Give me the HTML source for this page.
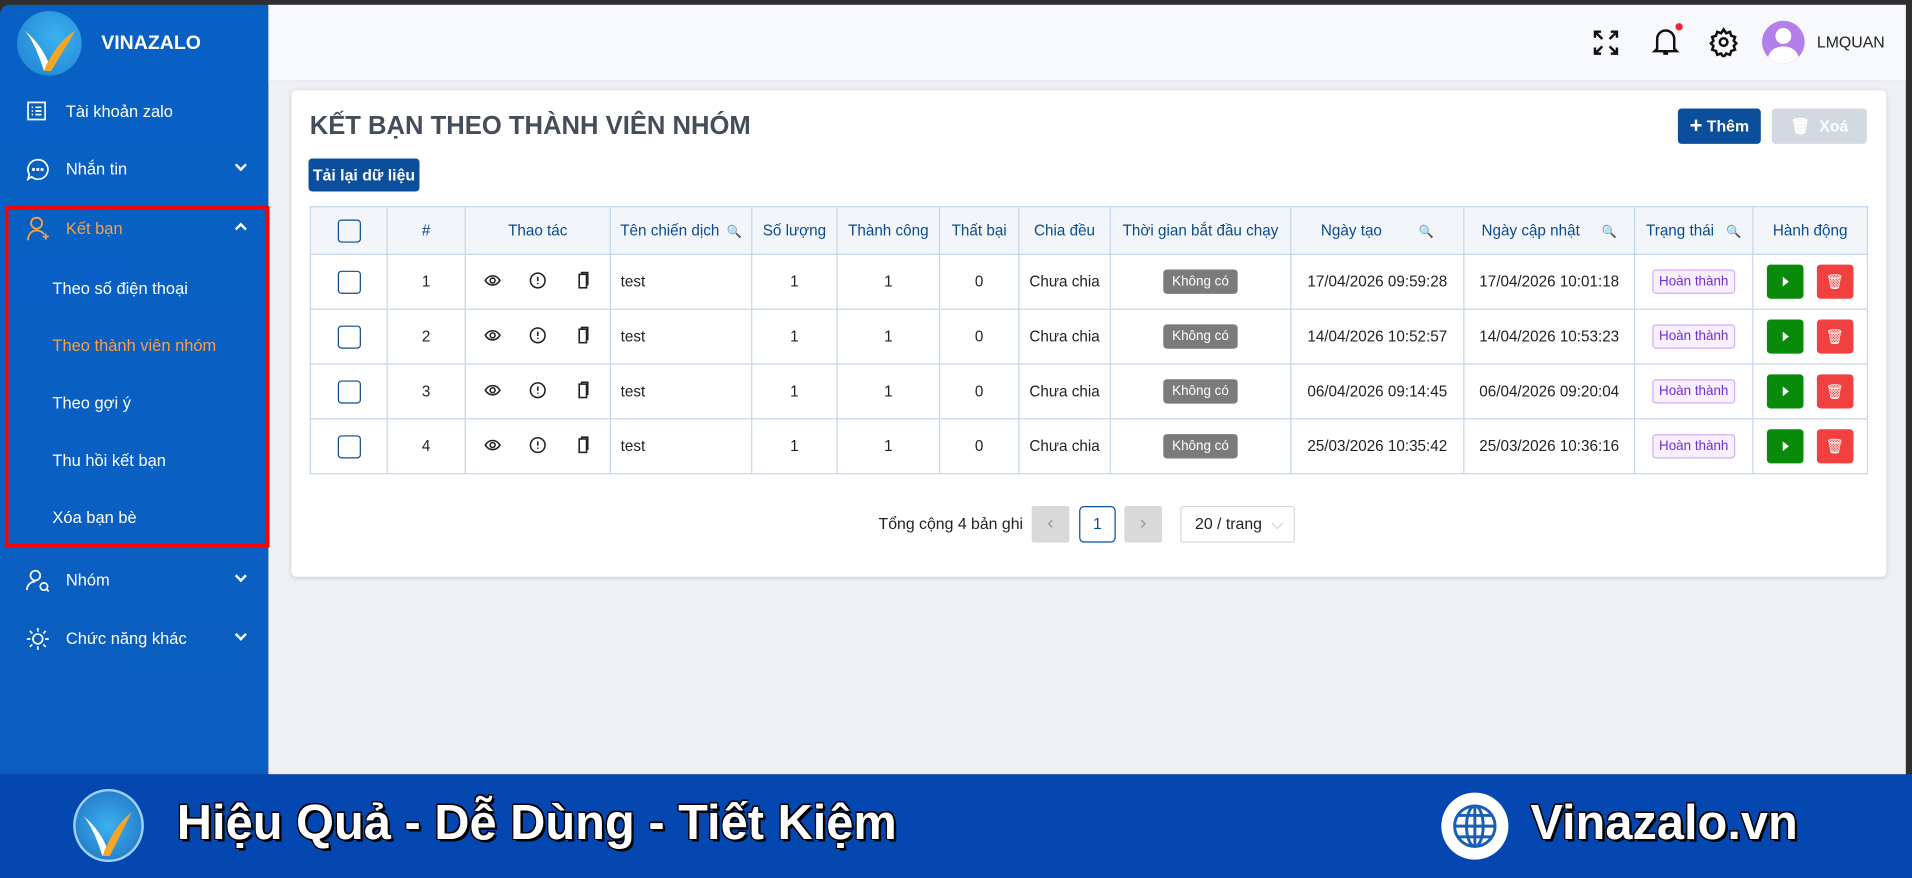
<!DOCTYPE html>
<html><head><meta charset="utf-8"><style>
*{box-sizing:border-box;margin:0;padding:0}
body{width:1912px;height:878px;overflow:hidden;background:#333;font-family:"Liberation Sans",Arial,sans-serif}
#s{position:absolute;left:0;top:0;width:1568px;height:720px;transform:scale(1.21939);transform-origin:0 0;background:#2f2f2f}
.abs{position:absolute}
.side{left:0;top:4px;width:220px;height:631px;background:linear-gradient(180deg,#0860c4,#0a5fc2 60%,#0b5ebf);border-top-left-radius:8px}
.side .it{position:absolute;left:54px;color:#fff;font-size:13.5px}
.side .sub{position:absolute;left:43px;color:#fff;font-size:13.5px}
.chev{position:absolute;left:194px;width:7px;height:7px;border-right:2px solid #fff;border-bottom:2px solid #fff;transform:rotate(45deg)}
.main{left:220px;top:4px;width:1343px;height:631px;background:#eef0f4}
.hdr{left:220px;top:4px;width:1343px;height:63px;background:#f7f9fc;border-bottom:1px solid #e3e6ea}
.card{left:239px;top:74px;width:1308px;height:399px;background:#fff;border-radius:4px;box-shadow:0 1px 4px rgba(0,0,0,.15)}
table{position:absolute;left:254px;top:169px;border-collapse:collapse;font-size:12.5px;color:#222}
td,th{border:1px solid #c5d6ea;text-align:center;padding:0}
th{height:39px;background:#f2f5fa;color:#0b4b8c;font-weight:normal;font-size:12.5px}
td{height:45px}
.cb{display:inline-block;width:19px;height:19px;border:1.5px solid #0b4b8c;border-radius:3px;vertical-align:middle}
.kc{display:inline-block;background:#7b7b7b;color:#fff;font-size:11px;padding:4px 7px;border-radius:3px}
.ht{display:inline-block;border:1px solid #d3adf7;background:#f9f0ff;color:#722ed1;font-size:11px;padding:3px 5px;border-radius:3px}
.bg{display:inline-block;width:30px;height:28px;border-radius:3px;vertical-align:middle;position:relative}
.q{font-size:10px;color:#0b4b8c;margin-left:6px}
.ban{left:0;top:635px;width:1568px;height:85px;background:#0547b1}
.bt{color:#fff;font-weight:bold;font-size:40px;text-shadow:2px 2px 0 #000,-1px -1px 0 #000,1px -1px 0 #000,-1px 1px 0 #000;font-family:"Liberation Sans",sans-serif}
</style></head><body><div id="s">
<div class="abs main"></div>
<div class="abs hdr"></div>
<div class="abs" style="left:1563px;top:4px;width:5px;height:631px;background:#2f2f2f"></div>
<svg class="abs" style="left:1306px;top:24px" width="22" height="22" viewBox="0 0 22 22" fill="none" stroke="#111" stroke-width="2"><path d="M2 7V2h5M15 2h5v5M20 15v5h-5M7 20H2v-5M2 2l6 6M20 2l-6 6M20 20l-6-6M2 20l6-6"/></svg>
<svg class="abs" style="left:1354px;top:21px" width="24" height="26" viewBox="0 0 24 26" fill="none" stroke="#111" stroke-width="2"><path d="M5 19V11a7 7 0 0114 0v8l2 2H3zM10 23h4"/></svg>
<div class="abs" style="left:1374px;top:19px;width:6px;height:6px;border-radius:50%;background:#f5222d"></div>
<svg class="abs" style="left:1401px;top:22px" width="25" height="25" viewBox="0 0 24 24" fill="none" stroke="#111" stroke-width="2"><circle cx="12" cy="12" r="3"/><path d="M12 2l2 3 3-1 1 3 3 1-1 3 2 2-2 2 1 3-3 1-1 3-3-1-2 3-2-3-3 1-1-3-3-1 1-3-2-2 2-2-1-3 3-1 1-3 3 1z"/></svg>
<div class="abs" style="left:1445px;top:17px;width:35px;height:35px;border-radius:50%;background:#b37feb;overflow:hidden"><div class="abs" style="left:11px;top:6px;width:13px;height:13px;border-radius:50%;background:#fff"></div><div class="abs" style="left:5px;top:21px;width:25px;height:20px;border-radius:50%;background:#fff"></div></div>
<div class="abs" style="left:1490px;top:27px;font-size:13px;color:#222">LMQUAN</div>
<div class="abs side">
<div class="abs" style="left:14px;top:5px;width:53px;height:53px;border-radius:50%;background:radial-gradient(circle at 60% 40%,#3db1ef,#1d7fd0)"></div>
<svg class="abs" style="left:14px;top:5px" width="53" height="53" viewBox="0 0 53 53"><path d="M6 16c6 6 12 20 16 33h6C24 34 14 22 6 16z" fill="#fff"/><path d="M22 49l6 0 20-33c-10 6-20 18-26 33z" fill="#f6a623"/></svg>
<div class="abs" style="left:83px;top:23px;color:#fff;font-weight:bold;font-size:16px">VINAZALO</div>
<svg class="abs" style="left:22px;top:79px" width="16" height="16" viewBox="0 0 16 16" fill="none" stroke="#fff" stroke-width="1.4"><rect x="1" y="1" width="14" height="14"/><path d="M4 5h1M7 5h5M4 8h1M7 8h5M4 11h1M7 11h5"/></svg>
<div class="it" style="top:80px">Tài khoản zalo</div>
<svg class="abs" style="left:21px;top:125px" width="20" height="20" viewBox="0 0 20 20" fill="none" stroke="#fff" stroke-width="1.4"><path d="M10 2a8 8 0 11-5 14l-3 2 1-4A8 8 0 0110 2z"/><circle cx="6.5" cy="10" r=".6" fill="#fff"/><circle cx="10" cy="10" r=".6" fill="#fff"/><circle cx="13.5" cy="10" r=".6" fill="#fff"/></svg>
<div class="it" style="top:127px">Nhắn tin</div><div class="chev" style="top:128px"></div>
<svg class="abs" style="left:21px;top:173px" width="20" height="22" viewBox="0 0 20 22" fill="none" stroke="#f5a04a" stroke-width="1.5"><circle cx="9" cy="6" r="4.5"/><path d="M2 20c0-5 3-8 7-8s5 2 6 3M14 17h5M16.5 14.5v5"/></svg>
<div class="it" style="top:176px;color:#f5a04a">Kết bạn</div><div class="chev" style="top:180px;transform:rotate(225deg)"></div>
<div class="sub" style="top:225px">Theo số điện thoại</div>
<div class="sub" style="top:272px;color:#f5a04a">Theo thành viên nhóm</div>
<div class="sub" style="top:319px">Theo gợi ý</div>
<div class="sub" style="top:366px">Thu hồi kết bạn</div>
<div class="sub" style="top:413px">Xóa bạn bè</div>
<div class="abs" style="left:4px;top:165px;width:217px;height:280px;border:3px solid #f00"></div>
<svg class="abs" style="left:21px;top:462px" width="20" height="20" viewBox="0 0 20 20" fill="none" stroke="#fff" stroke-width="1.4"><circle cx="8" cy="6" r="4"/><path d="M1 18c0-4 3-7 7-7M12 15a3 3 0 106 0 3 3 0 10-6 0M17 17l2 2"/></svg>
<div class="it" style="top:464px">Nhóm</div><div class="chev" style="top:465px"></div>
<svg class="abs" style="left:21px;top:510px" width="20" height="20" viewBox="0 0 20 20" fill="none" stroke="#fff" stroke-width="1.4"><circle cx="10" cy="10" r="4"/><path d="M10 1v3M10 16v3M1 10h3M16 10h3M3.5 3.5l2 2M14.5 14.5l2 2M3.5 16.5l2-2M14.5 5.5l2-2"/></svg>
<div class="it" style="top:512px">Chức năng khác</div><div class="chev" style="top:513px"></div>
</div>
<div class="abs card"></div>
<div class="abs" style="left:254px;top:92px;font-size:21px;font-weight:bold;color:#454d5a">KẾT BẠN THEO THÀNH VIÊN NHÓM</div>
<div class="abs" style="left:1376px;top:89px;width:68px;height:29px;background:#0b4f9c;border-radius:3px;color:#fff;font-size:13px;font-weight:bold;line-height:29px;text-align:center"><span style="font-size:18px;vertical-align:-1px">+</span> Thêm</div>
<div class="abs" style="left:1453px;top:89px;width:78px;height:29px;background:#d3d9e1;border-radius:3px;color:#fff;font-size:13px;font-weight:bold;line-height:29px;text-align:center">🗑&nbsp; Xoá</div>
<div class="abs" style="left:253px;top:130px;width:91px;height:27px;background:#0b4f9c;border-radius:3px;color:#fff;font-size:13px;font-weight:bold;line-height:27px;text-align:center">Tải lại dữ liệu</div>
<table>
<tr><th style="width:63px"><span class="cb"></span></th><th style="width:64px">#</th><th style="width:119px">Thao tác</th><th style="width:116px">Tên chiến dịch<span class="q">🔍</span></th><th style="width:70px">Số lượng</th><th style="width:84px">Thành công</th><th style="width:65px">Thất bại</th><th style="width:75px">Chia đều</th><th style="width:148px">Thời gian bắt đầu chạy</th><th style="width:142px">Ngày tạo<span class="q" style="margin-left:30px">🔍</span></th><th style="width:140px">Ngày cập nhật<span class="q" style="margin-left:18px">🔍</span></th><th style="width:97px">Trạng thái<span class="q" style="margin-left:10px">🔍</span></th><th style="width:94px">Hành động</th></tr>
<tr><td><span class="cb"></span></td><td>1</td><td><svg width="100" height="16" viewBox="0 0 100 16" fill="none" stroke="#222" stroke-width="1.3"><path d="M7 8c3-5 9-5 12 0-3 5-9 5-12 0z"/><circle cx="13" cy="8" r="2"/><circle cx="50" cy="8" r="6"/><path d="M50 5v3.5M50 10v1"/><rect x="84" y="3" width="6" height="11"/><path d="M86 3V1.5h5V12"/></svg></td><td style="text-align:left;padding-left:8px">test</td><td>1</td><td>1</td><td>0</td><td>Chưa chia</td><td><span class="kc">Không có</span></td><td>17/04/2026 09:59:28</td><td>17/04/2026 10:01:18</td><td><span class="ht">Hoàn thành</span></td><td><span class="bg" style="background:#0a8a0a"><b style="position:absolute;left:13px;top:10px;border-left:5px solid #fff;border-top:4px solid transparent;border-bottom:4px solid transparent"></b></span>&nbsp;&nbsp;&nbsp;<span class="bg" style="background:#f24040;color:#fff;font-size:12px;line-height:28px">🗑</span></td></tr>
<tr><td><span class="cb"></span></td><td>2</td><td><svg width="100" height="16" viewBox="0 0 100 16" fill="none" stroke="#222" stroke-width="1.3"><path d="M7 8c3-5 9-5 12 0-3 5-9 5-12 0z"/><circle cx="13" cy="8" r="2"/><circle cx="50" cy="8" r="6"/><path d="M50 5v3.5M50 10v1"/><rect x="84" y="3" width="6" height="11"/><path d="M86 3V1.5h5V12"/></svg></td><td style="text-align:left;padding-left:8px">test</td><td>1</td><td>1</td><td>0</td><td>Chưa chia</td><td><span class="kc">Không có</span></td><td>14/04/2026 10:52:57</td><td>14/04/2026 10:53:23</td><td><span class="ht">Hoàn thành</span></td><td><span class="bg" style="background:#0a8a0a"><b style="position:absolute;left:13px;top:10px;border-left:5px solid #fff;border-top:4px solid transparent;border-bottom:4px solid transparent"></b></span>&nbsp;&nbsp;&nbsp;<span class="bg" style="background:#f24040;color:#fff;font-size:12px;line-height:28px">🗑</span></td></tr>
<tr><td><span class="cb"></span></td><td>3</td><td><svg width="100" height="16" viewBox="0 0 100 16" fill="none" stroke="#222" stroke-width="1.3"><path d="M7 8c3-5 9-5 12 0-3 5-9 5-12 0z"/><circle cx="13" cy="8" r="2"/><circle cx="50" cy="8" r="6"/><path d="M50 5v3.5M50 10v1"/><rect x="84" y="3" width="6" height="11"/><path d="M86 3V1.5h5V12"/></svg></td><td style="text-align:left;padding-left:8px">test</td><td>1</td><td>1</td><td>0</td><td>Chưa chia</td><td><span class="kc">Không có</span></td><td>06/04/2026 09:14:45</td><td>06/04/2026 09:20:04</td><td><span class="ht">Hoàn thành</span></td><td><span class="bg" style="background:#0a8a0a"><b style="position:absolute;left:13px;top:10px;border-left:5px solid #fff;border-top:4px solid transparent;border-bottom:4px solid transparent"></b></span>&nbsp;&nbsp;&nbsp;<span class="bg" style="background:#f24040;color:#fff;font-size:12px;line-height:28px">🗑</span></td></tr>
<tr><td><span class="cb"></span></td><td>4</td><td><svg width="100" height="16" viewBox="0 0 100 16" fill="none" stroke="#222" stroke-width="1.3"><path d="M7 8c3-5 9-5 12 0-3 5-9 5-12 0z"/><circle cx="13" cy="8" r="2"/><circle cx="50" cy="8" r="6"/><path d="M50 5v3.5M50 10v1"/><rect x="84" y="3" width="6" height="11"/><path d="M86 3V1.5h5V12"/></svg></td><td style="text-align:left;padding-left:8px">test</td><td>1</td><td>1</td><td>0</td><td>Chưa chia</td><td><span class="kc">Không có</span></td><td>25/03/2026 10:35:42</td><td>25/03/2026 10:36:16</td><td><span class="ht">Hoàn thành</span></td><td><span class="bg" style="background:#0a8a0a"><b style="position:absolute;left:13px;top:10px;border-left:5px solid #fff;border-top:4px solid transparent;border-bottom:4px solid transparent"></b></span>&nbsp;&nbsp;&nbsp;<span class="bg" style="background:#f24040;color:#fff;font-size:12px;line-height:28px">🗑</span></td></tr>
</table>
<div class="abs" style="left:700px;top:422px;width:139px;text-align:right;font-size:13px;color:#222">Tổng cộng 4 bản ghi</div>
<div class="abs" style="left:846px;top:415px;width:31px;height:30px;background:#d9d9d9;border-radius:2px;color:#999;text-align:center;line-height:30px">‹</div>
<div class="abs" style="left:885px;top:415px;width:30px;height:30px;border:1px solid #0b4f9c;border-radius:4px;color:#0b4f9c;text-align:center;line-height:28px;font-size:13px">1</div>
<div class="abs" style="left:922px;top:415px;width:31px;height:30px;background:#d9d9d9;border-radius:2px;color:#999;text-align:center;line-height:30px">›</div>
<div class="abs" style="left:968px;top:415px;width:94px;height:30px;border:1px solid #d9d9d9;border-radius:2px;font-size:13px;color:#222;line-height:28px;padding-left:11px">20 / trang <span style="color:#bbb;margin-left:4px">⌵</span></div>
<div class="abs ban"></div>
<div class="abs" style="left:60px;top:647px;width:58px;height:60px;border-radius:50%;background:radial-gradient(circle,#3db1ef,#1d6fc0);border:2px solid #9fd0f5"></div>
<svg class="abs" style="left:60px;top:647px" width="58" height="60" viewBox="0 0 58 60"><path d="M8 22c6 6 12 20 16 33h6C26 40 16 28 8 22z" fill="#fff"/><path d="M24 55h6l18-36c-10 8-18 20-24 36z" fill="#f6a623"/></svg>
<div class="abs bt" style="left:145px;top:653px">Hiệu Quả - Dễ Dùng - Tiết Kiệm</div>
<div class="abs" style="left:1182px;top:650px;width:55px;height:55px;border-radius:50%;background:#fff"></div>
<svg class="abs" style="left:1190px;top:658px" width="39" height="39" viewBox="0 0 40 40" fill="none" stroke="#1a5fb4" stroke-width="2.5"><circle cx="20" cy="20" r="17"/><ellipse cx="20" cy="20" rx="7" ry="17"/><path d="M3 20h34M6 11h28M6 29h28M20 3v34"/></svg>
<div class="abs bt" style="left:1255px;top:653px">Vinazalo.vn</div>
</div></body></html>
